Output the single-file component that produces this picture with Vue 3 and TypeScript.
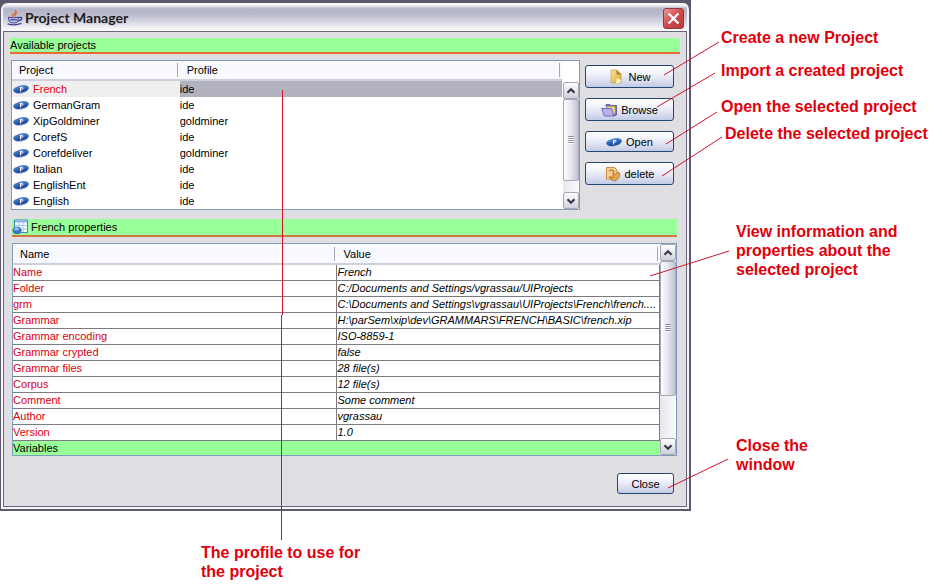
<script setup lang="ts">
import { ref } from 'vue'

interface Project {
  name: string
  profile: string
}

interface Property {
  name: string
  value: string
}

const projects: Project[] = [
  { name: 'French', profile: 'ide' },
  { name: 'GermanGram', profile: 'ide' },
  { name: 'XipGoldminer', profile: 'goldminer' },
  { name: 'CorefS', profile: 'ide' },
  { name: 'Corefdeliver', profile: 'goldminer' },
  { name: 'Italian', profile: 'ide' },
  { name: 'EnglishEnt', profile: 'ide' },
  { name: 'English', profile: 'ide' },
]

const properties: Property[] = [
  { name: 'Name', value: 'French' },
  { name: 'Folder', value: 'C:/Documents and Settings/vgrassau/UIProjects' },
  { name: 'grm', value: 'C:\\Documents and Settings\\vgrassau\\UIProjects\\French\\french....' },
  { name: 'Grammar', value: 'H:\\parSem\\xip\\dev\\GRAMMARS\\FRENCH\\BASIC\\french.xip' },
  { name: 'Grammar encoding', value: 'ISO-8859-1' },
  { name: 'Grammar crypted', value: 'false' },
  { name: 'Grammar files', value: '28 file(s)' },
  { name: 'Corpus', value: '12 file(s)' },
  { name: 'Comment', value: 'Some comment' },
  { name: 'Author', value: 'vgrassau' },
  { name: 'Version', value: '1.0' },
]

const selected = ref('French')
</script>

<template>
  <div class="page">
    <svg class="defs" width="0" height="0" aria-hidden="true">
      <defs>
        <linearGradient id="disc" x1="0" y1="0" x2="0" y2="1">
          <stop offset="0" stop-color="#5f97dc" />
          <stop offset="0.5" stop-color="#2c62bb" />
          <stop offset="1" stop-color="#17428f" />
        </linearGradient>
        <linearGradient id="gold" x1="0" y1="0" x2="1" y2="1">
          <stop offset="0" stop-color="#f9e7a0" />
          <stop offset="1" stop-color="#d9a52c" />
        </linearGradient>
        <symbol id="p-disc" viewBox="0 0 16 10">
          <ellipse cx="8" cy="5.7" rx="7.8" ry="3.8" fill="#9fb0cc" transform="rotate(-12 8 5)" />
          <ellipse cx="8" cy="5" rx="7.8" ry="3.7" fill="url(#disc)" transform="rotate(-12 8 5)" />
          <path d="M7.5 7.500V3M7.500 3.400h1.400q1 0 1 .9t-1 .9H7.500" fill="none" stroke="#fff" stroke-width="1" />
        </symbol>
      </defs>
    </svg>

    <div class="stage">
      <main class="main">
        <div class="desktop">
          <section class="window">
            <header class="titlebar">
              <svg class="java" viewBox="0 0 16 16" aria-hidden="true">
                <path d="M8 0Q10 2 7 3.800T6.600 7M10.200 2.400Q7.400 4 8.600 6.400" fill="none" stroke="#e0703a" stroke-width="1.4" />
                <path d="M1.600 7.200q4.600 1.400 9.600 0v2.400q-.4 2.600-2.200 3.200H4.200q-2.200-.8-2.600-3.200z" fill="#c9cdea" stroke="#3b3f96" />
                <path d="M11.400 7.600q3.400-.8 3.400.9 0 1.700-4 2.500M3 9.800h7M.6 13.800q7 2.200 13.800-.4" fill="none" stroke="#3b3f96" stroke-width="1.3" />
              </svg>
              <h1>Project Manager</h1>
              <button class="x-button" type="button" aria-label="Close window">
                <svg viewBox="0 0 21 21" aria-hidden="true">
                  <path d="M5 5l11 11M16 5l-11 11" stroke="#fff" stroke-width="2.6" />
                </svg>
              </button>
            </header>

            <div class="content">
              <h2 class="bar">Available projects</h2>

              <div class="projects">
                <div class="pane">
                  <table class="project-table">
                    <colgroup><col class="col-project" /><col /></colgroup>
                    <thead>
                      <tr><th>Project</th><th>Profile</th></tr>
                    </thead>
                    <tbody>
                      <tr
                        v-for="p in projects"
                        :key="p.name"
                        :class="{ selected: p.name === selected }"
                        @click="selected = p.name"
                      >
                        <td>
                          <span class="project-name">
                            <svg class="disc" aria-hidden="true"><use href="#p-disc" /></svg>{{ p.name }}
                          </span>
                        </td>
                        <td>{{ p.profile }}</td>
                      </tr>
                    </tbody>
                  </table>
                  <div class="scrollbar">
                    <button type="button" aria-label="Scroll up">
                      <svg viewBox="0 0 16 16" aria-hidden="true"><path d="M4 10l4-4 4 4" /></svg>
                    </button>
                    <div class="track"><div class="thumb thumb-projects"><i></i></div></div>
                    <button type="button" aria-label="Scroll down">
                      <svg viewBox="0 0 16 16" aria-hidden="true"><path d="M4 6l4 4 4-4" /></svg>
                    </button>
                  </div>
                </div>

                <div class="actions">
                  <button class="btn" type="button">
                    <svg class="icon" viewBox="0 0 16 16" aria-hidden="true">
                      <path d="M5 4.500h9v9.500h-9z" fill="#d8cfb4" opacity=".6" />
                      <path d="M3 1h6l4 4v9H3z" fill="url(#gold)" stroke="#c9a24a" stroke-width=".7" />
                      <path d="M8.500 1v4.500H13z" fill="#a8832f" />
                      <path d="M9 9l4 2-1 3H8z" fill="#fdf6d2" />
                    </svg>
                    New
                  </button>
                  <button class="btn" type="button">
                    <svg class="icon" viewBox="0 0 16 16" aria-hidden="true">
                      <path d="M5 4V2.500h4l1 1h5.500V13l-3 1z" fill="#7d74c4" stroke="#564da6" stroke-width=".8" />
                      <path d="M6 4.500h8V12H6z" fill="#f3dc7e" stroke="#b89a45" stroke-width=".6" />
                      <path d="M.6 6.500h10l2.400 7.500H3.400z" fill="#b6b0ee" stroke="#5b52ac" stroke-width=".8" />
                    </svg>
                    Browse
                  </button>
                  <button class="btn btn-short" type="button">
                    <svg class="disc" aria-hidden="true"><use href="#p-disc" /></svg>
                    Open
                  </button>
                  <button class="btn" type="button">
                    <svg class="icon" viewBox="0 0 16 16" aria-hidden="true">
                      <path d="M1.500 1.500h8l2.500 2.500v9h-10.500z" fill="#f3cf90" stroke="#c98f42" />
                      <path d="M4 5q3-2 5 .5L8 7M4 10.500q2 2 5 0" fill="none" stroke="#b9772c" stroke-width="1.200" />
                      <path d="M8 7l2 1.500 3.500-2.500L15 8l-1 3.500-3.500 3.500-4-1L5.500 11l2.500.5z" fill="#e5a64e" stroke="#b06f25" stroke-width=".8" />
                    </svg>
                    delete
                  </button>
                </div>
              </div>

              <h2 class="bar bar-properties">
                <svg class="icon" viewBox="0 0 16 16" aria-hidden="true">
                  <path d="M2.500 1h13v12.500h-13z" fill="#f4f9ff" stroke="#4c83c4" />
                  <path d="M3 1.500h12v2H3z" fill="#8fb9e8" />
                  <path d="M3 6.500h12M3 10h12M7 3v10M11 3v10" stroke="#a9c8e8" />
                  <ellipse cx="5" cy="11.500" rx="4.600" ry="3.800" fill="#3e74bd" />
                  <ellipse cx="4.500" cy="10" rx="2.600" ry="1.500" fill="#93bfe9" />
                </svg>
                {{ selected }} properties
              </h2>

              <div class="pane pane-properties">
                <table class="property-table">
                  <colgroup><col class="col-name" /><col /></colgroup>
                  <thead>
                    <tr><th>Name</th><th>Value</th></tr>
                  </thead>
                  <tbody>
                    <tr v-for="p in properties" :key="p.name">
                      <td class="prop-name">{{ p.name }}</td>
                      <td class="prop-value">{{ p.value }}</td>
                    </tr>
                    <tr class="group">
                      <td colspan="2">Variables</td>
                    </tr>
                  </tbody>
                </table>
                <div class="scrollbar scrollbar-full">
                  <button type="button" aria-label="Scroll up">
                    <svg viewBox="0 0 16 16" aria-hidden="true"><path d="M4 10l4-4 4 4" /></svg>
                  </button>
                  <div class="track"><div class="thumb thumb-properties"><i></i></div></div>
                  <button type="button" aria-label="Scroll down">
                    <svg viewBox="0 0 16 16" aria-hidden="true"><path d="M4 6l4 4 4-4" /></svg>
                  </button>
                </div>
              </div>

              <footer class="footer">
                <button class="btn btn-short btn-close" type="button">Close</button>
              </footer>
            </div>
          </section>
        </div>
        <p class="note note-profile">The profile to use for<br />the project</p>
      </main>

      <aside class="notes">
        <p class="note">Create a new Project</p>
        <p class="note note-import">Import a created project</p>
        <p class="note note-open">Open the selected project</p>
        <p class="note note-delete">Delete the selected project</p>
        <p class="note note-view">View information and<br />properties about the<br />selected project</p>
        <p class="note note-close">Close the<br />window</p>
      </aside>
    </div>

    <svg class="leaders leaders-right" width="300" height="588" aria-hidden="true">
      <path d="M22 75L77 42M15 107L73 73M24 144L75 112M20 176L80 137M8 276L87 251M26 488L86 459" />
    </svg>
    <svg class="leaders leaders-left" width="300" height="588" aria-hidden="true">
      <rect x="282" y="90" width="1" height="225" />
      <rect x="281" y="315" width="1" height="225" />
    </svg>
  </div>
</template>

<style>
body {
  background: #fff;
}
</style>

<style scoped>
.page {
  position: relative;
  font: 11px/16px "Liberation Sans", Arial, sans-serif;
  color: #000;
}
.defs {
  position: absolute;
}
.stage {
  display: flex;
}
.main {
  flex: 1;
  min-width: 0;
}
.desktop {
  background: #5c586c;
  padding-top: 3px;
}
.window {
  border: 1px solid #5c586e;
  border-top: 0;
  border-right-width: 2px;
  border-bottom-width: 2px;
  border-radius: 7px 7px 0 0;
  background: #f6f6fa;
  padding: 0 2px 2px;
}
.titlebar {
  display: flex;
  align-items: center;
  box-sizing: border-box;
  height: 28px;
  padding: 2px 3px 0 4px;
  border-radius: 6px 6px 0 0;
  background: linear-gradient(#fff 0, #f4f4f8 2px, #b4b4c8 6px, #bcbccf 12px, #dcdce6 20px, #fafafc 27px);
}
.java {
  width: 16px;
  height: 16px;
}
h1 {
  flex: 1;
  margin: 0 0 0 2px;
  font: bold 14px/18px Lato, "Noto Sans", sans-serif;
  color: #1c1c24;
  text-shadow: 1px 1px 1px #c8c8d4;
}
.x-button {
  width: 21px;
  height: 21px;
  padding: 0;
  border: 1px solid #8a3a44;
  border-radius: 3px;
  background: linear-gradient(135deg, #eb9a96, #cf4a4c 50%, #b93b40);
}
.x-button svg {
  display: block;
  width: 19px;
  height: 19px;
}
.content {
  display: flex;
  flex-direction: column;
  padding: 6px 6px 12px;
  border: 1px solid #6a667c;
  background: #dfdee3;
}
.bar {
  display: flex;
  align-items: center;
  height: 14px;
  margin: 0;
  border-bottom: 2px solid #ea6a35;
  background: #9f9;
  font-size: 11px;
  font-weight: normal;
}
.bar-properties {
  height: 16px;
  margin: 9px 3px 6px 2px;
  gap: 3px;
  border-bottom-color: #d07840;
}
.icon {
  flex: none;
  width: 16px;
  height: 16px;
}
.disc {
  flex: none;
  width: 16px;
  height: 10px;
}
.projects {
  display: flex;
  gap: 5px;
  margin: 6px 6px 0 1px;
}
.pane {
  display: flex;
  flex: 1;
  min-width: 0;
  border: 1px solid #7f9db9;
  background: #fff;
}
.pane-properties {
  margin: 0 3px 0 2px;
}
table {
  flex: 1;
  min-width: 0;
  table-layout: fixed;
  border-collapse: separate;
  border-spacing: 0;
}
th {
  height: 20px;
  box-sizing: border-box;
  padding: 0 7px;
  border-bottom: 2px solid #cfcfdb;
  background: linear-gradient(#9fa8b8, #9fa8b8) right 2px center / 1px 14px no-repeat, #f8f9fe;
  font-weight: normal;
  line-height: 18px;
  text-align: left;
}
td {
  height: 16px;
  box-sizing: border-box;
  padding: 0;
  overflow: hidden;
  line-height: 15px;
  white-space: nowrap;
}
.col-project {
  width: 30.5%;
}
.col-name {
  width: 50%;
}
.project-table {
  align-self: flex-start;
}
.project-name {
  display: flex;
  align-items: center;
  gap: 4px;
  padding-left: 1px;
}
.selected td {
  background: #b2b2bf;
}
.selected td:first-child {
  background: #efefef;
  color: #e00010;
}
.property-table th {
  height: 21px;
}
.property-table td {
  padding: 0 1px;
  border-right: 1px solid #7c7c80;
  border-bottom: 1px solid #7c7c80;
}
.property-table .prop-name {
  padding: 0;
  color: #d8000c;
}
.prop-value {
  font-style: italic;
  text-overflow: ellipsis;
}
.property-table .group td {
  height: 14px;
  padding: 0;
  border: 0;
  background: #9f9;
  line-height: 14px;
}
.scrollbar {
  display: flex;
  flex-direction: column;
  width: 16px;
  margin: 21px 0 0 1px;
}
.scrollbar-full {
  margin: 0;
}
.scrollbar button {
  flex: none;
  height: 17px;
  padding: 0;
  border: 1px solid #a4a8b4;
  border-radius: 2px;
  background: linear-gradient(#fff, #cfd0dc);
}
.scrollbar svg {
  display: block;
  width: 14px;
  height: 14px;
}
.scrollbar path {
  fill: none;
  stroke: #383848;
  stroke-width: 2.5;
}
.track {
  flex: 1;
  background: linear-gradient(90deg, #e6e6ec, #fbfbfd);
}
.thumb {
  display: flex;
  align-items: center;
  justify-content: center;
  box-sizing: border-box;
  border: 1px solid #a4a8b8;
  border-radius: 2px;
  background: linear-gradient(90deg, #fbfbff, #e6e6f0 50%, #c2c2d2);
}
.thumb i {
  width: 6px;
  height: 8px;
  background: repeating-linear-gradient(#8e92a4 0 1px, #fff 1px 2px);
}
.thumb-projects {
  height: 88%;
}
.thumb-properties {
  height: 76%;
}
.actions {
  display: flex;
  flex-direction: column;
  gap: 10px;
  width: 89px;
  padding-top: 5px;
}
.btn {
  display: flex;
  align-items: center;
  justify-content: center;
  gap: 4px;
  height: 23px;
  padding: 0;
  border: 1px solid #24476f;
  border-radius: 3px;
  background: linear-gradient(#fff, #f1f3fb 35%, #d3d8ec 80%, #c0cbe6);
  font: inherit;
  color: #000;
}
.btn-short {
  height: 21px;
}
.footer {
  display: flex;
  justify-content: flex-end;
  margin: 17px 6px 0 0;
}
.btn-close {
  width: 57px;
}
.notes {
  flex: none;
  box-sizing: border-box;
  width: 251px;
  padding: 28px 0 0 30px;
}
.note {
  margin: 0;
  font: bold 16px/19px "Liberation Sans", Arial, sans-serif;
  color: #e0000c;
  white-space: nowrap;
}
.note-import {
  margin-top: 14px;
}
.note-open {
  margin-top: 17px;
}
.note-delete {
  margin-top: 8px;
  padding-left: 4px;
}
.note-view {
  margin-top: 79px;
  padding-left: 15px;
}
.note-close {
  margin-top: 157px;
  padding-left: 15px;
}
.note-profile {
  padding: 32px 0 0 201px;
}
.leaders {
  position: absolute;
  top: 0;
  pointer-events: none;
}
.leaders path {
  fill: none;
  stroke: #d0142c;
  stroke-width: 1;
}
.leaders rect {
  fill: #d0142c;
}
.leaders-right {
  right: 0;
}
.leaders-left {
  left: 0;
}
</style>
